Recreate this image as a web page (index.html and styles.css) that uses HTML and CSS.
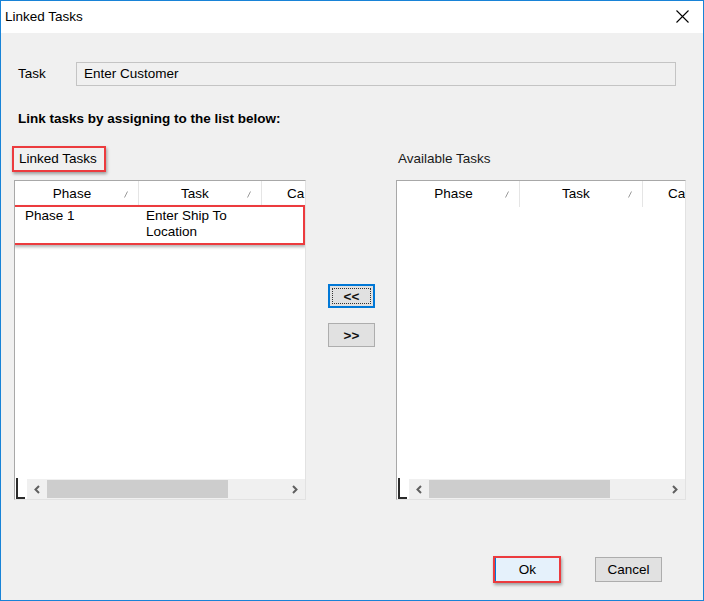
FILE: index.html
```html
<!DOCTYPE html>
<html>
<head>
<meta charset="utf-8">
<link rel="stylesheet" href="styles.css">
</head>
<body>
<div class="window">
  <div class="titlebar">
    <span class="title">Linked Tasks</span>
    <svg class="close" width="13" height="13" viewBox="0 0 13 13"><path d="M0.5 0.5 L12.5 12.5 M12.5 0.5 L0.5 12.5" stroke="#000" stroke-width="1.1" fill="none"/></svg>
  </div>
  <div class="body">
    <div class="task-row">
      <span class="task-label">Task</span>
      <div class="textbox">Enter Customer</div>
    </div>
    <div class="instr">Link tasks by assigning to the list below:</div>
    <div class="lists">
      <div class="cap cap-left"><span class="hl">Linked Tasks</span></div>
      <div></div>
      <div class="cap cap-right">Available Tasks</div>

      <div class="list list-left">
        <div class="head">
          <div class="hc hc-phase">Phase<svg class="sort" width="4" height="7" viewBox="0 0 4 7"><path d="M0.5 6.5 L3.5 0.5" stroke="#9a9a9a" stroke-width="1" fill="none"/></svg></div>
          <div class="hc hc-task">Task<svg class="sort" width="4" height="7" viewBox="0 0 4 7"><path d="M0.5 6.5 L3.5 0.5" stroke="#9a9a9a" stroke-width="1" fill="none"/></svg></div>
          <div class="hc hc-cat">Ca</div>
        </div>
        <div class="rows">
          <div class="row marked">
            <div class="c c-phase">Phase 1</div>
            <div class="c c-task">Enter Ship To<br>Location</div>
          </div>
        </div>
        <div class="hscroll">
          <div class="corner"><span class="lmark"></span></div>
          <div class="track">
            <div class="arrow"><svg width="6" height="9" viewBox="0 0 6 9"><path d="M5 1 L1.5 4.5 L5 8" stroke="#606060" stroke-width="2" fill="none"/></svg></div>
            <div class="thumb"></div>
            <div class="rest"></div>
            <div class="arrow"><svg width="6" height="9" viewBox="0 0 6 9"><path d="M1 1 L4.5 4.5 L1 8" stroke="#606060" stroke-width="2" fill="none"/></svg></div>
          </div>
        </div>
      </div>

      <div class="mover">
        <button class="mbtn focused"><span class="focusrect">&lt;&lt;</span></button>
        <button class="mbtn">&gt;&gt;</button>
      </div>

      <div class="list list-right">
        <div class="head">
          <div class="hc hc-phase r">Phase<svg class="sort" width="4" height="7" viewBox="0 0 4 7"><path d="M0.5 6.5 L3.5 0.5" stroke="#9a9a9a" stroke-width="1" fill="none"/></svg></div>
          <div class="hc hc-task">Task<svg class="sort" width="4" height="7" viewBox="0 0 4 7"><path d="M0.5 6.5 L3.5 0.5" stroke="#9a9a9a" stroke-width="1" fill="none"/></svg></div>
          <div class="hc hc-cat">Ca</div>
        </div>
        <div class="rows"></div>
        <div class="hscroll">
          <div class="corner"><span class="lmark"></span></div>
          <div class="track">
            <div class="arrow"><svg width="6" height="9" viewBox="0 0 6 9"><path d="M5 1 L1.5 4.5 L5 8" stroke="#606060" stroke-width="2" fill="none"/></svg></div>
            <div class="thumb"></div>
            <div class="rest"></div>
            <div class="arrow"><svg width="6" height="9" viewBox="0 0 6 9"><path d="M1 1 L4.5 4.5 L1 8" stroke="#606060" stroke-width="2" fill="none"/></svg></div>
          </div>
        </div>
      </div>
    </div>
    <div class="footer">
      <button class="btn ok marked-btn">Ok</button>
      <button class="btn">Cancel</button>
    </div>
  </div>
</div>
</body>
</html>
```

FILE: styles.css
```css
* { box-sizing: border-box; }
html, body { margin: 0; padding: 0; }
body {
  width: 704px;
  height: 601px;
  font-family: "Liberation Sans", Arial, sans-serif;
  font-size: 13.5px;
  color: #000;
  background: #f0f0f0;
  overflow: hidden;
}
.window {
  width: 704px;
  height: 601px;
  border: 1px solid #1883d7;
  background: #f0f0f0;
  display: flex;
  flex-direction: column;
}
.titlebar {
  height: 32px;
  background: #fff;
  display: flex;
  align-items: center;
  justify-content: space-between;
  padding: 0 14px 0 4px;
  flex-shrink: 0;
}
.title { line-height: 16px; }
.close { display: block; margin-top: -1px; }

.body {
  flex: 1;
  display: flex;
  flex-direction: column;
}
.task-row {
  display: flex;
  align-items: center;
  margin-top: 29px;
  padding-left: 17px;
}
.task-label { width: 58px; line-height: 16px; }
.textbox {
  width: 600px;
  height: 24px;
  border: 1px solid #c4c4c4;
  background: #f0f0f0;
  padding-left: 7px;
  line-height: 21px;
}
.instr {
  margin-top: 25px;
  padding-left: 17px;
  font-weight: bold;
  line-height: 16px;
}
.lists {
  margin-top: 19px;
  margin-left: 13px;
  display: grid;
  grid-template-columns: 292px 90px 290px;
  grid-template-rows: 26px 320px;
  row-gap: 8px;
}
.cap { display: flex; align-items: center; line-height: 16px; }
.cap-left { margin-left: -2px; }
.cap-right { padding-left: 2px; color: #1a1a1a; }
.hl {
  display: inline-block;
  border: 2px solid #ec3b3e;
  padding: 3px 7px 3px 5px;
  line-height: 16px;
  box-shadow: 1px 2px 3px rgba(0, 0, 0, 0.35);
}

.list {
  background: #fff;
  border: 1px solid #a8a8a8;
  border-right-color: #e2e2e2;
  border-bottom-color: #e2e2e2;
  display: flex;
  flex-direction: column;
  overflow: hidden;
}
.head {
  display: flex;
  height: 26px;
  flex-shrink: 0;
}
.hc {
  position: relative;
  height: 26px;
  border-right: 1px solid #e5e5e5;
  display: flex;
  align-items: center;
  justify-content: center;
  flex-shrink: 0;
  line-height: 16px;
}
.hc-phase { width: 124px; padding-right: 9px; }
.hc-phase.r { width: 123px; padding-right: 9px; }
.hc-task { width: 123px; padding-right: 10px; }
.hc-cat { width: 40px; justify-content: flex-start; padding-left: 25px; border-right: none; }
.sort { position: absolute; right: 10px; top: 10px; }

.rows { flex: 1; }
.row {
  position: relative;
  display: flex;
  height: 36px;
  margin-right: 2px;
  padding-top: 1px;
  line-height: 16px;
}
.row.marked::after {
  content: "";
  position: absolute;
  left: -2px;
  top: -2px;
  right: -2px;
  bottom: -2px;
  border: 2px solid #ec3b3e;
  box-shadow: 1px 2px 3px rgba(0, 0, 0, 0.3);
}
.c-phase { width: 124px; padding-left: 10px; }
.c-task { padding-left: 7px; }

.hscroll {
  display: flex;
  height: 20px;
  flex-shrink: 0;
}
.corner { width: 12px; background: #fff; position: relative; }
.lmark {
  position: absolute;
  left: 1px;
  top: -1px;
  width: 9px;
  height: 21px;
  border-left: 2px solid #2a2a2a;
  border-bottom: 2px solid #2a2a2a;
}
.track {
  flex: 1;
  display: flex;
  background: #f0f0f0;
}
.arrow {
  width: 20px;
  display: flex;
  align-items: center;
  justify-content: center;
}
.thumb {
  width: 181px;
  margin: 1px 0;
  background: #cdcdcd;
}
.rest { flex: 1; }

.mover {
  display: flex;
  flex-direction: column;
  align-items: flex-start;
  padding-left: 22px;
  padding-top: 104px;
  gap: 15px;
}
.mbtn {
  width: 47px;
  height: 24px;
  background: #e1e1e1;
  border: 1px solid #adadad;
  font-family: "Liberation Sans", Arial, sans-serif;
  font-size: 13.5px;
  font-weight: bold;
  color: #111;
  padding: 0;
  display: flex;
  align-items: center;
  justify-content: center;
}
.mbtn.focused {
  border: 2px solid #0078d7;
  padding: 2px;
}
.focusrect {
  display: flex;
  align-items: center;
  justify-content: center;
  width: 100%;
  height: 100%;
  border: 1px dotted #333;
}

.footer {
  display: flex;
  justify-content: flex-end;
  margin-top: 57px;
  padding-right: 41px;
  gap: 35px;
}
.btn {
  width: 67px;
  height: 25px;
  background: #e1e1e1;
  border: 1px solid #adadad;
  font-family: "Liberation Sans", Arial, sans-serif;
  font-size: 13.5px;
  color: #000;
  padding: 0;
}
.btn.ok {
  background: #e5f1fb;
  border: 1px solid #0078d7;
  position: relative;
  width: 65px;
}
.btn.ok::after {
  content: "";
  position: absolute;
  left: -3px;
  top: -2px;
  right: -2px;
  bottom: -2px;
  border: 2px solid #ec3b3e;
  box-shadow: 1px 2px 3px rgba(0, 0, 0, 0.35);
}
```
